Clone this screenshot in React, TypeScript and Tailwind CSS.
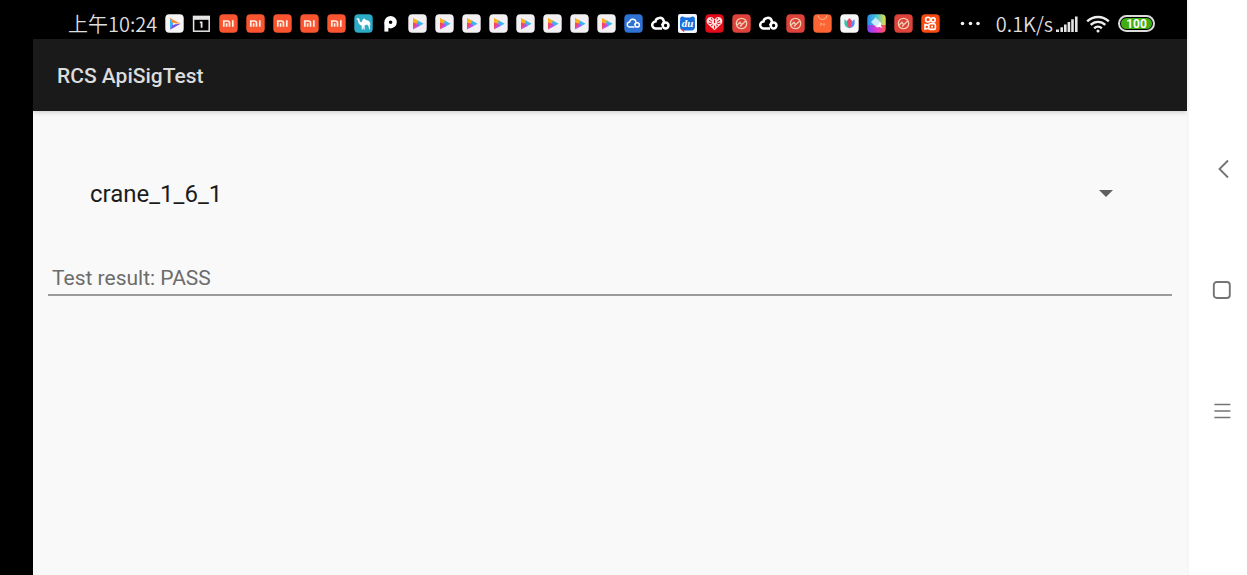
import type { ReactNode } from "react";

const Tile = ({ fill, children }: { fill: string; children?: ReactNode }) => (
  <svg className="h-[19px] w-[19px] shrink-0" viewBox="0 0 19 19" aria-hidden="true">
    <rect x="0.3" y="0.3" width="18.4" height="18.4" rx="4" fill={fill} />
    {children}
  </svg>
);

const VideoIcon = () => (
  <Tile fill="#f6f4f5">
    <path d="M5 4v11.4L8.4 9.7z" fill="#2fb4f5" />
    <path d="M4.6 3.8 15.6 9.7 7.6 9z" fill="#fb8a2e" />
    <path d="M5 15.8 15.6 9.7 7.6 10.4z" fill="#7a4be8" />
    <path d="M8 8.4v2.8l2.4-1.4z" fill="#f6f4f5" />
  </Tile>
);

const CalendarIcon = () => (
  <svg className="h-[19px] w-[19px] shrink-0" viewBox="0 0 19 19" aria-hidden="true">
    <rect x="1.6" y="2.4" width="15.6" height="14.8" fill="none" stroke="#e6e6e6" strokeWidth="1.5" />
    <path d="M.9 2h17v3.8H.9z" fill="#e6e6e6" />
    <path d="M7.8 8.4h1.8v5.4" fill="none" stroke="#e6e6e6" strokeWidth="1.8" />
  </svg>
);

const MiIcon = () => (
  <Tile fill="#fb5430">
    <path
      d="M4.8 12.8V7h3.5q2.2 0 2.2 1.8v4M7.6 9.2v3.6M13.8 6.3v6.5"
      fill="none"
      stroke="#fff0e6"
      strokeWidth="1.7"
    />
  </Tile>
);

const CamelIcon = () => (
  <Tile fill="#2cabc6">
    <path
      d="M2 5.2 3.8 4l1.6.8.4 2.8 1.6.6C8.2 7 8.8 4.4 10 4.4c1.2 0 1.4 1.6 2.6 1.8 1.8.2 3 .8 3.4 2.4l.5 2.8-.9-1.4.2 1.6.4 3.6h-1l-.8-3.2-1.4-1.4-2.4.8.2 4h-1L9 12.2l-.2 3.2h-1l-.2-4C5.8 11 4.4 9.800 4.200 8L3.800 5.800z"
      fill="#fff"
    />
  </Tile>
);

const PIcon = () => (
  <svg className="h-[19px] w-[19px] shrink-0" viewBox="0 0 19 19" aria-hidden="true">
    <circle cx="9.6" cy="8.2" r="4" fill="none" stroke="#fff" strokeWidth="4.4" />
    <path d="M3.4 8.2h4v9.4h-4z" fill="#fff" />
  </svg>
);

const PlayIcon = () => (
  <Tile fill="#f3f0f4">
    <path d="M5 4v11.400l4.600-5.700z" fill="#f4475c" />
    <path d="M5 4l5.400 2.800-1.200 3L5 8.600z" fill="#f9b021" />
    <path d="M9.800 6.500 15.600 9.700 11 12.200 9 9.600z" fill="#38b6ee" />
    <path d="M5 15.400 11.600 11.900 9.200 9z" fill="#c04ee8" />
  </Tile>
);

const CloudShape = ({ width }: { width: number }) => (
  <g fill="none" stroke="#fff" strokeWidth={width}>
    <path d="M11 14.400H4.800a3.400 3.400 0 0 1-.4-6.800 4.300 4.300 0 0 1 8.400-.6q.2.800 0 1.600" />
    <path d="M12.800 8.400 11 11.400" />
    <circle cx="14.600" cy="11.500" r="2.900" />
  </g>
);

const CloudTileIcon = () => (
  <Tile fill="#2e72d4">
    <g transform="translate(2.400 2.400) scale(.74)">
      <CloudShape width={1.9} />
    </g>
  </Tile>
);

const CloudIcon = () => (
  <svg className="h-[19px] w-[19px] shrink-0 overflow-visible" viewBox="0 0 19 19" aria-hidden="true">
    <CloudShape width={2.5} />
  </svg>
);

const DuIcon = () => (
  <svg className="h-[19px] w-[19px] shrink-0 overflow-visible" viewBox="0 0 19 19" aria-hidden="true">
    <rect width="19" height="19" rx="2" fill="#f4f8fd" />
    <rect x="2" y="3.600" width="15" height="13" rx="4" fill="#176fdc" />
    <circle cx="4.400" cy="4.600" r="2.200" fill="#176fdc" />
    <circle cx="14.600" cy="4.600" r="2.200" fill="#176fdc" />
    <path d="m3.200 15 3 2.600" stroke="#e8434d" strokeWidth="1.300" />
    <text x="9.500" y="13.200" textAnchor="middle" fill="#fff" className="font-['Liberation_Serif',serif] text-[11px] font-bold italic">
      du
    </text>
  </svg>
);

const HeartIcon = () => (
  <Tile fill="#e30b17">
    <path d="M9.500 16.200 2.200 9.400C.6 6 2.800 3 5.500 3q2.600 0 4 2.400Q10.900 3 13.500 3c2.700 0 4.900 3 3.300 6.400z" fill="#fbdede" />
    <path
      d="m4 6.200 3 2M15 6.200l-3 2M9.500 6v3M6.400 4l.8 1.800M12.600 4l-.8 1.800M3.600 9.200l3 .4M15.400 9.200l-3 .4M6 12l2-1.400M13 12l-2-1.400M9.500 11.600v3"
      fill="none"
      stroke="#e30b17"
      strokeWidth="1"
    />
  </Tile>
);

const PulseIcon = () => (
  <Tile fill="#dd433b">
    <circle cx="9.500" cy="9.500" r="5.200" fill="none" stroke="#f3cdb0" strokeWidth="1.300" />
    <path d="m5 11 3-2.600 1.600 2.400 4.400-4M8 12.400l1.800-1.400" fill="none" stroke="#f3cdb0" strokeWidth="1.400" />
  </Tile>
);

const ShopIcon = () => (
  <Tile fill="#fc6533">
    <path d="M5 1.400c.4 5.400 8.600 5.400 9 0" fill="none" stroke="#ffc0a0" strokeWidth="1" />
    <path d="M7.400 11.600V9.400h1.400v2.200M10.400 9.400v2.200M11.800 9.400v2.200" fill="none" stroke="#ffb795" strokeWidth=".7" />
  </Tile>
);

const TulipIcon = () => (
  <Tile fill="#f8f7f8">
    <path d="M4.400 5.200q3.600 2 5.100 9-5.100-1-5.100-5z" fill="#37c3ae" />
    <path d="M14.600 5.200q-3.600 2-5.100 9 5.100-1 5.100-5z" fill="#5b8df0" />
    <path d="m9.500 4 2.600 3-.6 4.400-2 2.800-2-2.800L6.900 7z" fill="#ee4668" />
  </Tile>
);

const PaintIcon = () => (
  <svg className="h-[19px] w-[19px] shrink-0" viewBox="0 0 19 19" aria-hidden="true">
    <defs>
      <clipPath id="paint-tile">
        <rect x=".3" y=".3" width="18.400" height="18.400" rx="4" />
      </clipPath>
      <linearGradient id="paint-top" x1="0" x2="1">
        <stop offset="0" stopColor="#2787ef" />
        <stop offset=".5" stopColor="#4ac9d8" />
        <stop offset="1" stopColor="#f6dc35" />
      </linearGradient>
      <linearGradient id="paint-bottom" x1="0" x2="1">
        <stop offset="0" stopColor="#6a4cf2" />
        <stop offset=".5" stopColor="#e436d8" />
        <stop offset="1" stopColor="#fb5a48" />
      </linearGradient>
    </defs>
    <g clipPath="url(#paint-tile)">
      <path d="M0 0h19v11H0z" fill="url(#paint-top)" />
      <path d="M0 11h19v8H0z" fill="url(#paint-bottom)" />
      <path d="m8.600 3.400 5 4.800-4.800 4.600L4 8z" fill="#cbeafc" />
      <path d="m13.200 8 1.200 1.200-.6 2.200 1.600 2.600-3-1-2.400.4-1-1z" fill="#fff" />
    </g>
  </svg>
);

const CameraIcon = () => (
  <Tile fill="#fb4a12">
    <g fill="none" stroke="#fff" strokeWidth="1.600">
      <circle cx="7" cy="5.600" r="2.400" />
      <circle cx="12.200" cy="5.900" r="2" />
      <rect x="7.800" y="9.800" width="6.600" height="5.600" rx="1.400" />
      <path d="m7.600 11.400-3.600-.8v4.400l3.600-.8M10 12.600h2" />
    </g>
  </Tile>
);

const notifications = [
  VideoIcon, CalendarIcon,
  MiIcon, MiIcon, MiIcon, MiIcon, MiIcon,
  CamelIcon, PIcon,
  PlayIcon, PlayIcon, PlayIcon, PlayIcon, PlayIcon, PlayIcon, PlayIcon, PlayIcon,
  CloudTileIcon, CloudIcon, DuIcon, HeartIcon,
  PulseIcon, CloudIcon, PulseIcon, ShopIcon,
  TulipIcon, PaintIcon, PulseIcon, CameraIcon,
];

const StatusBar = () => (
  <header className="flex h-[39px] items-center bg-black pt-2 pr-8 pl-[68px] text-[#dedede]">
    <span className="w-[97px] shrink-0 font-['Noto_Sans_CJK_SC',sans-serif] text-[20px] leading-6 font-[350] whitespace-nowrap">
      上午10:24
    </span>
    <div className="flex gap-2">
      {notifications.map((Icon, i) => (
        <Icon key={i} />
      ))}
    </div>
    <div className="ml-auto flex items-center">
      <svg className="mr-4 h-[5px] w-5" viewBox="0 0 20 5" fill="#f2f2f2" aria-hidden="true">
        <circle cx="2.500" cy="2.500" r="1.800" />
        <circle cx="10.500" cy="2.500" r="1.800" />
        <circle cx="18" cy="2.500" r="1.800" />
      </svg>
      <span className="font-['Noto_Sans_CJK_SC',sans-serif] text-[20px] leading-6 font-[350] whitespace-nowrap">0.1K/s</span>
      <svg className="ml-[3px] h-[19px] w-[22px]" viewBox="0 0 22 19" fill="#e4e4e4" aria-hidden="true">
        <path d="M0 15.600h3v2.400H0zM4.400 13.200h2.600v4.800H4.400zM8 10.600h2.600v7.400H8zM11.600 8h2.600v10h-2.600zM15.200 5.200h2.600v12.800h-2.600zM19 2.400h2.600v15.600H19z" />
      </svg>
      <svg className="ml-2 h-[19px] w-6" viewBox="0 0 24 19" fill="none" stroke="#ededed" strokeWidth="2.400" aria-hidden="true">
        <path d="M1.200 7.400a15.400 15.400 0 0 1 21.600 0M4.700 10.900a10.300 10.300 0 0 1 14.600 0M8.200 14.300a5.500 5.500 0 0 1 7.600 0" />
        <circle cx="12" cy="16.900" r="1.500" fill="#ededed" stroke="none" />
      </svg>
      <div className="ml-2 flex h-[17px] w-[37px] rounded-full border-2 border-[#dcdcdc] p-px">
        <div className="flex flex-1 items-center justify-center rounded-full bg-[#3fae10] font-['Roboto',sans-serif] text-[12px] leading-none font-bold text-white">
          100
        </div>
      </div>
    </div>
  </header>
);

const NavBar = () => (
  <nav className="flex w-[60px] shrink-0 flex-col items-center justify-center gap-[97px] border-l-2 border-[#f6f6f6] bg-white pt-[5px] pl-2">
    <button type="button" aria-label="Back" className="h-6 w-6">
      <svg viewBox="0 0 24 24" fill="none" stroke="#747474" strokeWidth="1.900">
        <path d="M18 3.500 9.500 12l8.500 8.500" />
      </svg>
    </button>
    <button type="button" aria-label="Home" className="h-6 w-6">
      <svg viewBox="0 0 24 24" fill="none" stroke="#747474" strokeWidth="1.900">
        <rect x="3.800" y="4" width="16" height="16" rx="3" />
      </svg>
    </button>
    <button type="button" aria-label="Menu" className="h-6 w-6">
      <svg viewBox="0 0 24 24" fill="none" stroke="#747474" strokeWidth="1.700">
        <path d="M4.400 5.500h16M4.400 12h16M4.400 18.500h16" />
      </svg>
    </button>
  </nav>
);

const App = () => {
  return (
    <div className="flex min-h-screen bg-white font-['Roboto',sans-serif]">
      <div className="flex min-w-0 flex-1 flex-col bg-black">
        <StatusBar />
        <div className="ml-[33px] flex flex-1 flex-col bg-[#f9f9f9]">
          {/* App bar */}
          <div className="flex h-[72px] items-center bg-[#1a1a1a] px-6 pt-1 shadow-[0_1px_5px_rgba(0,0,0,0.2)]">
            <h1 className="text-[21px] font-medium text-[#dcdcdc]">RCS ApiSigTest</h1>
          </div>

          <main className="px-[15px] pt-[59px]">
            {/* Test suite picker */}
            <div className="relative mr-[43px] ml-[42px]">
              <select
                aria-label="Test suite"
                className="block h-12 w-full appearance-none bg-transparent text-[24px] text-[#1c1c1c] outline-none"
              >
                <option>crane_1_6_1</option>
              </select>
              <svg className="pointer-events-none absolute top-5 right-4 h-[7px] w-[14px]" viewBox="0 0 14 7" aria-hidden="true">
                <path d="M0 0h14L7 7z" fill="#5f5f5f" />
              </svg>
            </div>

            <input
              type="text"
              aria-label="Test result"
              readOnly
              defaultValue="Test result: PASS"
              className="mt-11 block h-[34px] w-full border-b-2 border-[#9b9b9b] bg-transparent px-1 text-[21px] text-[#6c6c6c] outline-none"
            />
          </main>
        </div>
      </div>
      <NavBar />
    </div>
  );
};

export default App;
